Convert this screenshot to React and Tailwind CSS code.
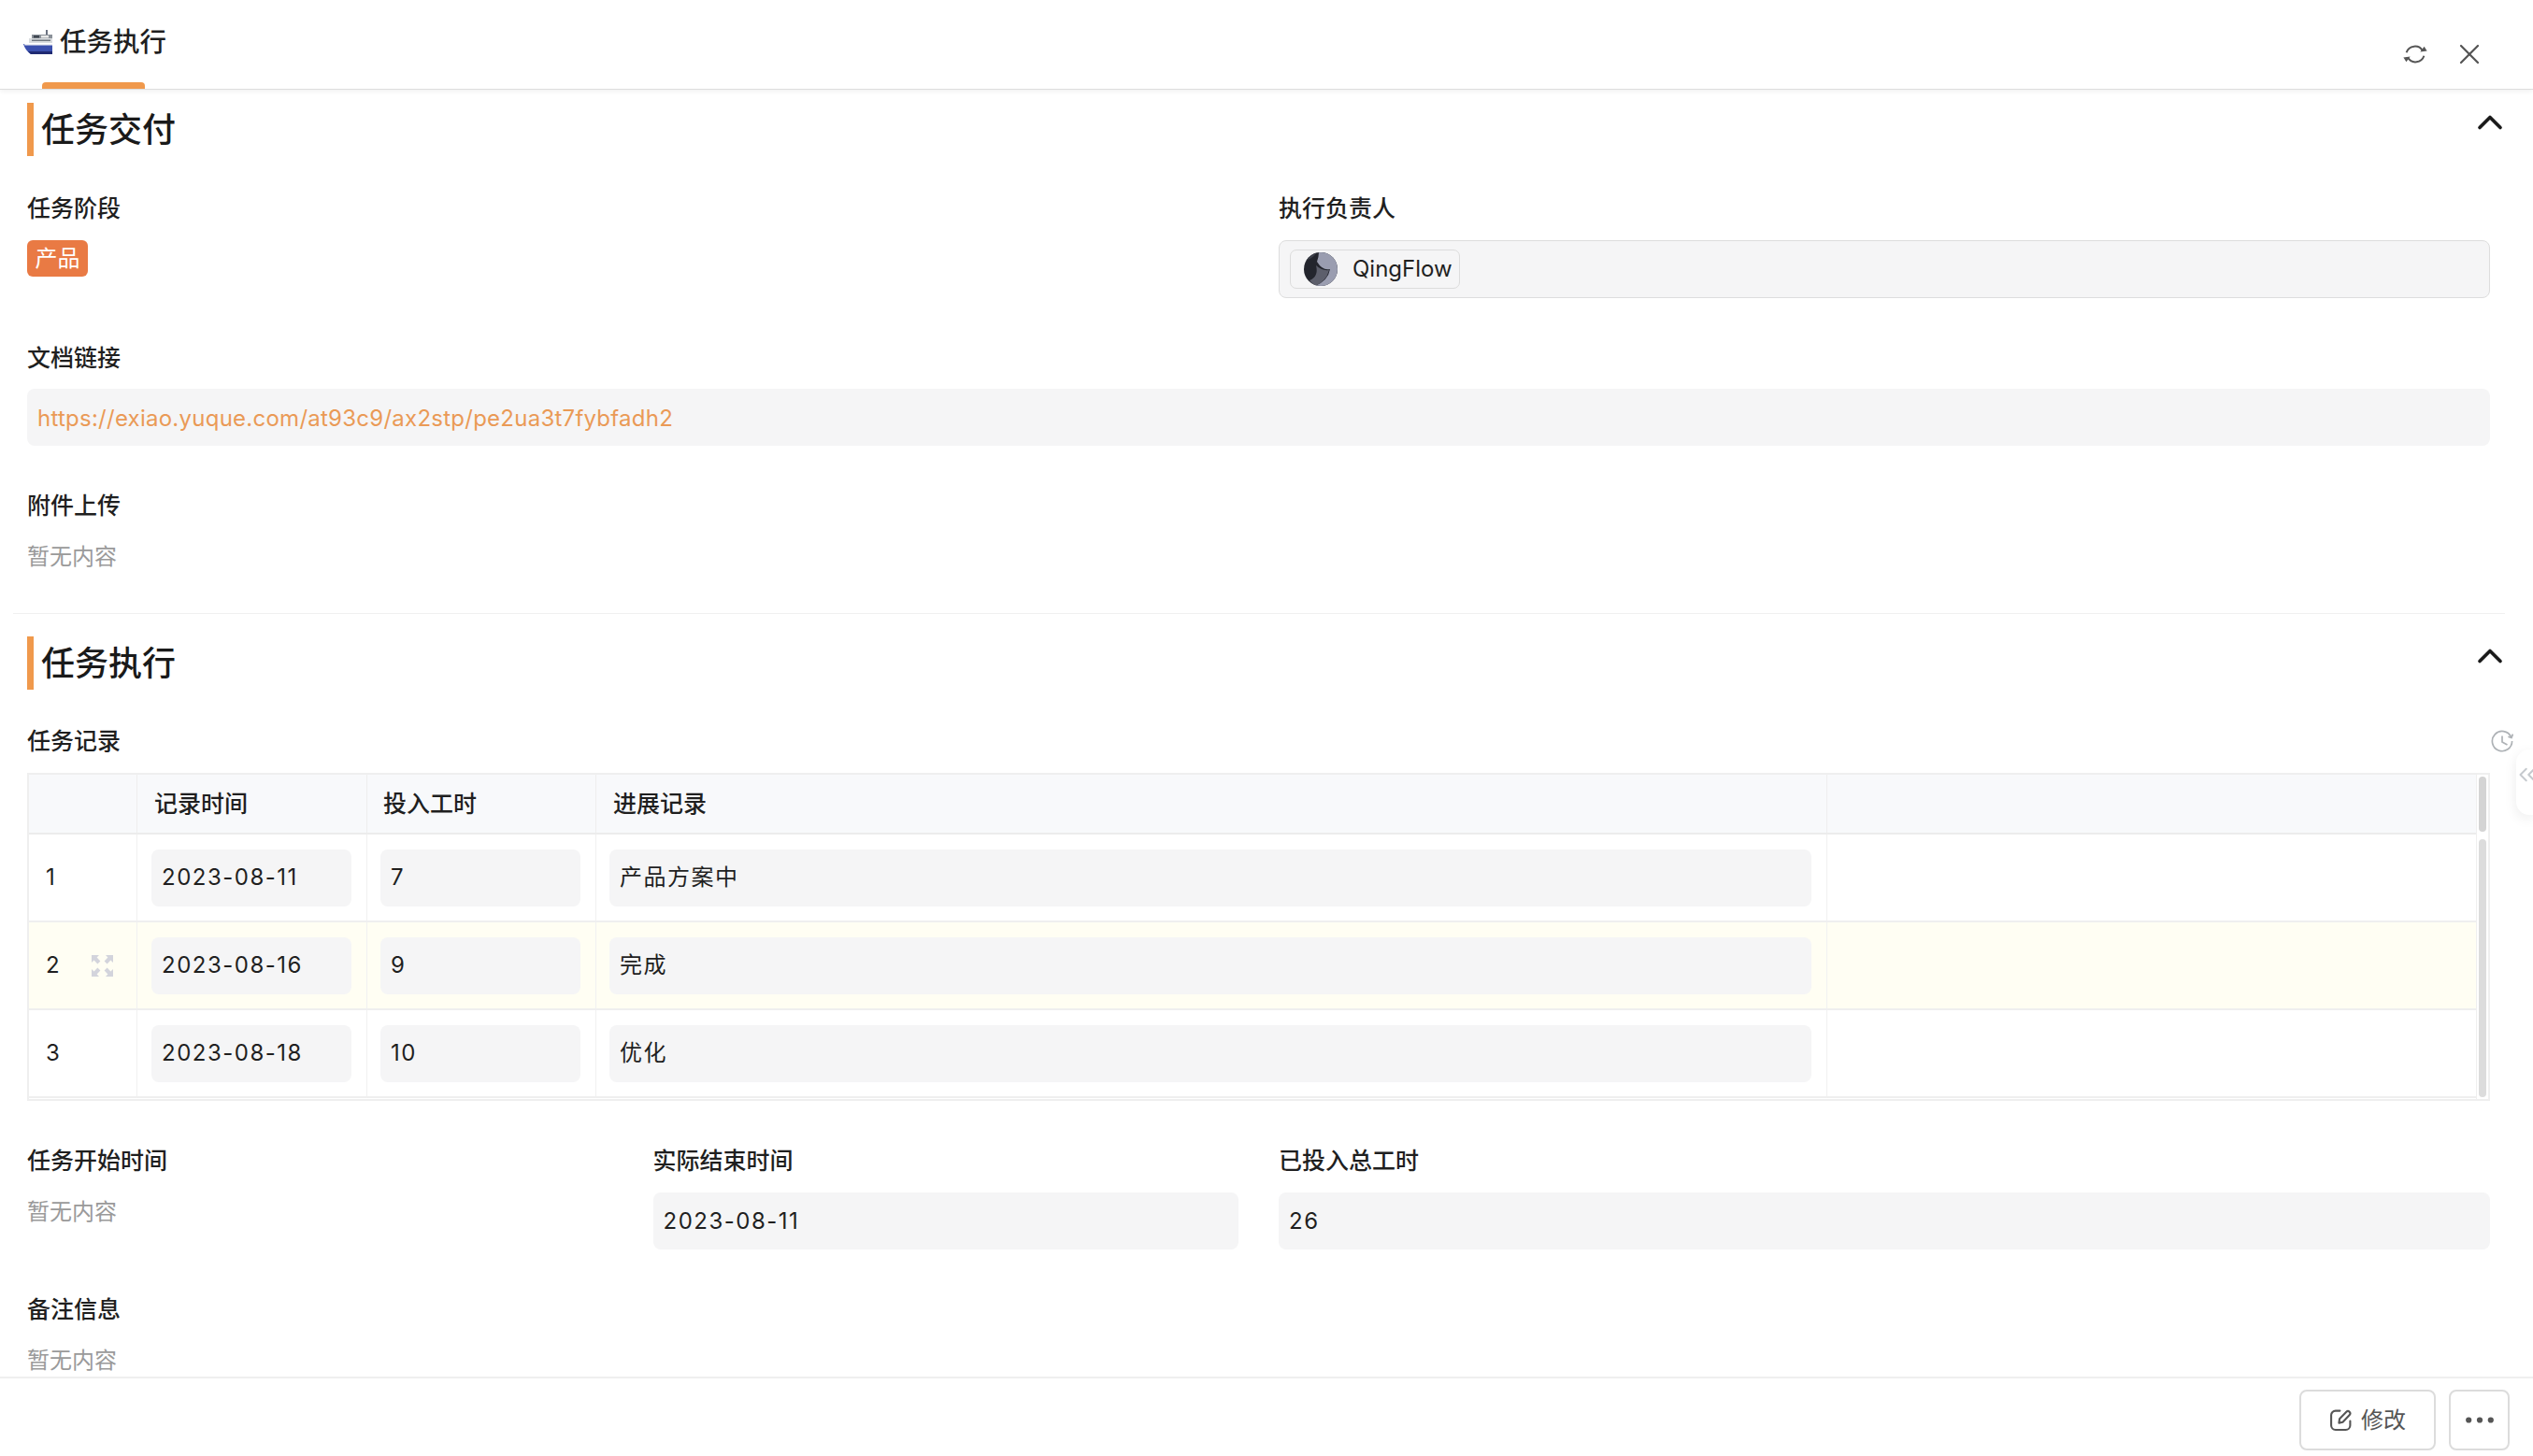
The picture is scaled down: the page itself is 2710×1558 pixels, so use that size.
import React from 'react';
import { ChevronUp, ChevronsLeft, X } from 'lucide-react';

const font = "font-['Inter','Noto_Sans_CJK_SC',sans-serif]";

const ShipIcon = () => (
  <svg viewBox="0 0 32 26" className="w-[32px] h-[26px] shrink-0">
    <rect x="24" y="0" width="2" height="6" fill="#6b7280" />
    <rect x="9" y="5" width="22" height="5" fill="#8b9199" />
    <rect x="6" y="9" width="25" height="5" fill="#d9dcdf" />
    <rect x="11" y="6" width="6" height="2.5" fill="#3f4650" />
    <rect x="19" y="6" width="8" height="2.5" fill="#e8e8e8" />
    <rect x="9" y="10.5" width="20" height="1.5" fill="#707780" />
    <path d="M0 15 H31 V26 H8 Q2 22 0 15 Z" fill="#3b50ae" />
    <path d="M1 15 H31 V16.5 H1.5 Z" fill="#eef0f4" />
    <path d="M5 23 H31 V26 H8 Z" fill="#1f2a72" />
  </svg>
);

const RefreshIcon = () => (
  <svg viewBox="0 0 26 22" fill="none" className="w-[26px] h-[22px]">
    <path d="M3.6 9.2A9.6 9.6 0 0 1 21 7.4" stroke="#555" strokeWidth="2" />
    <path d="M22.4 12.8A9.6 9.6 0 0 1 5 14.6" stroke="#555" strokeWidth="2" />
    <path d="M18.4 8.6 L25.6 7.6 L22.6 2.8 Z" fill="#555" />
    <path d="M7.6 13.4 L0.4 14.4 L3.4 19.2 Z" fill="#555" />
  </svg>
);

const ExpandIcon = () => (
  <svg viewBox="0 0 23 23" className="w-[23px] h-[23px]" fill="#d3d4dc">
    <path d="M0 0 H8 L5.6 2.6 L9.4 6.4 L6.4 9.4 L2.6 5.6 L0 8 Z" />
    <path d="M23 0 H15 L17.4 2.6 L13.6 6.4 L16.6 9.4 L20.4 5.6 L23 8 Z" />
    <path d="M0 23 H8 L5.6 20.4 L9.4 16.6 L6.4 13.6 L2.6 17.4 L0 15 Z" />
    <path d="M23 23 H15 L17.4 20.4 L13.6 16.6 L16.6 13.6 L20.4 17.4 L23 15 Z" />
  </svg>
);

const ClockIcon = () => (
  <svg viewBox="0 0 24 24" fill="none" stroke="#aeb2b6" strokeWidth="1.7" className="w-[24px] h-[24px] mr-[-25px] mt-[4px] shrink-0">
    <path d="M21.6 7.6A10.6 10.6 0 1 0 22.6 12" />
    <path d="M12 6.5V13L17.5 16" />
    <path d="M23.4 4.6L22 8.4L18.4 7.2" />
  </svg>
);

const EditIcon = () => (
  <svg viewBox="0 0 24 24" fill="none" stroke="#555" strokeWidth="2" strokeLinejoin="round" strokeLinecap="round" className="w-[25px] h-[25px] shrink-0">
    <path d="M11 2.5H6.5a4.5 4.5 0 0 0-4.5 4.5v10.5a4.5 4.5 0 0 0 4.5 4.5H17a4.5 4.5 0 0 0 4.5-4.5V13" />
    <path d="M10 15l.6-4.2L17.6 3.6a2.3 2.3 0 0 1 3.3 3.2L13.9 14.2Z" />
  </svg>
);

const DotsIcon = () => (
  <svg viewBox="0 0 30 7" fill="#555" className="w-[30px] h-[7px]">
    <circle cx="3.2" cy="3.5" r="3.1" />
    <circle cx="15" cy="3.5" r="3.1" />
    <circle cx="26.8" cy="3.5" r="3.1" />
  </svg>
);

const Avatar = () => (
  <svg viewBox="0 0 36 36" className="w-[36px] h-[36px] shrink-0">
    <defs>
      <clipPath id="ava"><circle cx="18" cy="18" r="18" /></clipPath>
    </defs>
    <g clipPath="url(#ava)">
      <rect width="36" height="36" fill="#23252d" />
      <path d="M16 0 H36 V36 H12 Q26 30 28 18 Q20 20 14 10 Q16 4 16 0 Z" fill="#9a9db0" />
      <path d="M12 36 Q24 31 27 19 Q19 20 13 14 Q16 26 6 30 Z" fill="#5d5f6c" />
      <path d="M0 0 H14 Q10 6 4 8 L0 10 Z" fill="#3c3f49" />
    </g>
  </svg>
);

const Label = ({ children, className = 'mb-[18px]' }) => (
  <div className={`h-[32px] leading-[32px] text-[25px] font-medium text-[#1f1f1f] ${className}`}>{children}</div>
);

const Empty = () => <div className="h-[42px] leading-[42px] text-[24px] text-[#9a9a9a]">暂无内容</div>;

const ValueBox = ({ children, className = 'tracking-[1.5px]' }) => (
  <div className={`w-full h-[61px] flex items-center px-[11px] rounded-[8px] bg-[#f5f5f6] text-[24px] text-[#1f1f1f] ${className}`}>
    {children}
  </div>
);

const SectionTitle = ({ title, className }) => (
  <div className={`flex items-start justify-between ${className}`}>
    <div className="h-[57px] border-l-[7px] border-[#f0994c] pl-[8px] flex items-center text-[36px] font-medium text-[#1a1a1a]">
      {title}
    </div>
    <ChevronUp className="w-[44px] h-[44px] text-[#1a1a1a] mr-[-22px] mt-[-1px]" strokeWidth={2} />
  </div>
);

const rows = [
  { no: '1', date: '2023-08-11', hours: '7', note: '产品方案中' },
  { no: '2', date: '2023-08-16', hours: '9', note: '完成', active: true },
  { no: '3', date: '2023-08-18', hours: '10', note: '优化' },
];

const cols = 'grid grid-cols-[116px_246px_245px_1317px_1fr]';

const RecordTable = () => (
  <div className="flex border-2 border-[#efefef] h-[351px]">
    <div className="flex-1 min-w-0">
      <div className={`${cols} h-[64px] bg-[#f8f9fb] border-b-2 border-[#ececec] text-[25px] font-medium text-[#1f1f1f]`}>
        <div className="border-r border-[#eeeeee]" />
        <div className="border-r border-[#eeeeee] flex items-center pl-[18px] pt-[2px]">记录时间</div>
        <div className="border-r border-[#eeeeee] flex items-center pl-[17px] pt-[2px]">投入工时</div>
        <div className="border-r border-[#eeeeee] flex items-center pl-[18px] pt-[2px]">进展记录</div>
        <div />
      </div>
      {rows.map((row) => (
        <div key={row.no} className={`${cols} h-[94px] border-b-2 border-[#efefef] ${row.active ? 'bg-[#fffef3]' : 'bg-white'}`}>
          <div className="border-r border-[#f1f1f1] flex items-center justify-between pl-[18px] pr-[25px] text-[24px] text-[#1f1f1f]">
            <span>{row.no}</span>
            {row.active && <ExpandIcon />}
          </div>
          <div className="border-r border-[#f1f1f1] flex items-center pl-[15px] pr-[16px]">
            <ValueBox>{row.date}</ValueBox>
          </div>
          <div className="border-r border-[#f1f1f1] flex items-center pl-[14px] pr-[16px]">
            <ValueBox>{row.hours}</ValueBox>
          </div>
          <div className="border-r border-[#f1f1f1] flex items-center pl-[14px] pr-[16px]">
            <ValueBox>{row.note}</ValueBox>
          </div>
          <div />
        </div>
      ))}
    </div>
    <div className="w-[13px] flex flex-col items-center pt-[2px] border-l border-[#efefef]">
      <div className="w-[8px] h-[59px] rounded-[4px] bg-[#d4d4d4]" />
      <div className="w-[8px] flex-1 mt-[8px] mb-[2px] rounded-[4px] bg-[#dcdcdc]" />
    </div>
  </div>
);

export default function App() {
  return (
    <div className={`${font} relative w-full h-screen flex flex-col bg-white overflow-hidden`}>
      {/* top bar */}
      <header className="relative z-10 h-[96px] shrink-0 border-b border-[#dddddd] shadow-[0_2px_5px_rgba(0,0,0,0.06)] bg-white flex justify-between">
        <div className="relative pl-[25px] pt-[32px] flex items-start gap-[7px] w-[200px]">
          <ShipIcon />
          <span className="text-[28.5px] leading-[26px] font-medium text-[#1f1f1f] whitespace-nowrap">任务执行</span>
          <div className="absolute left-[45px] bottom-0 w-[110px] h-[7px] rounded-t-[4px] bg-[#f0994c]" />
        </div>
        <div className="flex items-start pt-[47px] pr-[50px] gap-[27px]">
          <RefreshIcon />
          <X className="w-[36px] h-[36px] text-[#555555] mt-[-7px]" strokeWidth={1.5} />
        </div>
      </header>

      {/* form */}
      <main className="flex-1 min-h-0 overflow-hidden">
        <div className="pt-[14px] pr-[46px] pl-[29px]">
          <SectionTitle title="任务交付" className="mb-[40px]" />
          <div className="grid grid-cols-4 gap-x-[43px] gap-y-[48px]">
            <div className="col-span-2">
              <Label>任务阶段</Label>
              <div className="w-[65px] h-[39px] rounded-[6px] bg-[#e97a44] text-white text-[24px] leading-[39px] text-center">产品</div>
            </div>
            <div className="col-span-2">
              <Label>执行负责人</Label>
              <div className="h-[62px] flex items-center pl-[11px] rounded-[8px] bg-[#f5f5f6] border border-[#dddddd]">
                <div className="h-[42px] w-[182px] flex items-center gap-[16px] pl-[14px] rounded-[7px] border border-[#dcdcdc] text-[24px] text-[#1f1f1f]">
                  <Avatar />
                  <span>QingFlow</span>
                </div>
              </div>
            </div>
            <div className="col-span-4">
              <Label className="mb-[17px]">文档链接</Label>
              <ValueBox className="text-[#ea9a56]! tracking-[0.25px] pt-[3px]">https://exiao.yuque.com/at93c9/ax2stp/pe2ua3t7fybfadh2</ValueBox>
            </div>
            <div className="col-span-4">
              <Label>附件上传</Label>
              <Empty />
            </div>
          </div>
        </div>

        <div className="ml-[14px] mr-[30px] mt-[39px] border-t border-[#f0f0f0]" />

        <div className="pt-[24px] pr-[46px] pl-[29px]">
          <SectionTitle title="任务执行" className="mb-[39px]" />
          <div className="flex items-start justify-between">
            <Label>任务记录</Label>
            <ClockIcon />
          </div>
          <RecordTable />
          <div className="grid grid-cols-4 gap-x-[43px] gap-y-[48px] mt-[48px]">
            <div>
              <Label>任务开始时间</Label>
              <Empty />
            </div>
            <div>
              <Label>实际结束时间</Label>
              <ValueBox>2023-08-11</ValueBox>
            </div>
            <div className="col-span-2">
              <Label>已投入总工时</Label>
              <ValueBox>26</ValueBox>
            </div>
            <div className="col-span-4">
              <Label>备注信息</Label>
              <Empty />
            </div>
          </div>
        </div>
      </main>

      {/* bottom bar */}
      <footer className="relative z-10 h-[85px] shrink-0 bg-white border-t-2 border-[#efefef] flex items-start justify-end gap-[14px] pt-[12px] pr-[25px]">
        <button className="w-[146px] h-[65px] flex items-center justify-center gap-[9px] rounded-[8px] border-2 border-[#dcdcdc] text-[24px] text-[#555555]">
          <EditIcon />
          修改
        </button>
        <button className="w-[65px] h-[65px] flex items-center justify-center rounded-[8px] border-2 border-[#dcdcdc]">
          <DotsIcon />
        </button>
      </footer>

      {/* side handle over the right edge */}
      <div className="absolute right-0 top-[802px] w-[18px] h-[70px] rounded-l-[14px] bg-white shadow-[0_4px_14px_rgba(0,0,0,0.08)] pt-[12px]">
        <ChevronsLeft className="w-[30px] h-[30px] text-[#c5c9ce] ml-[-3px]" strokeWidth={1.6} />
      </div>
    </div>
  );
}
